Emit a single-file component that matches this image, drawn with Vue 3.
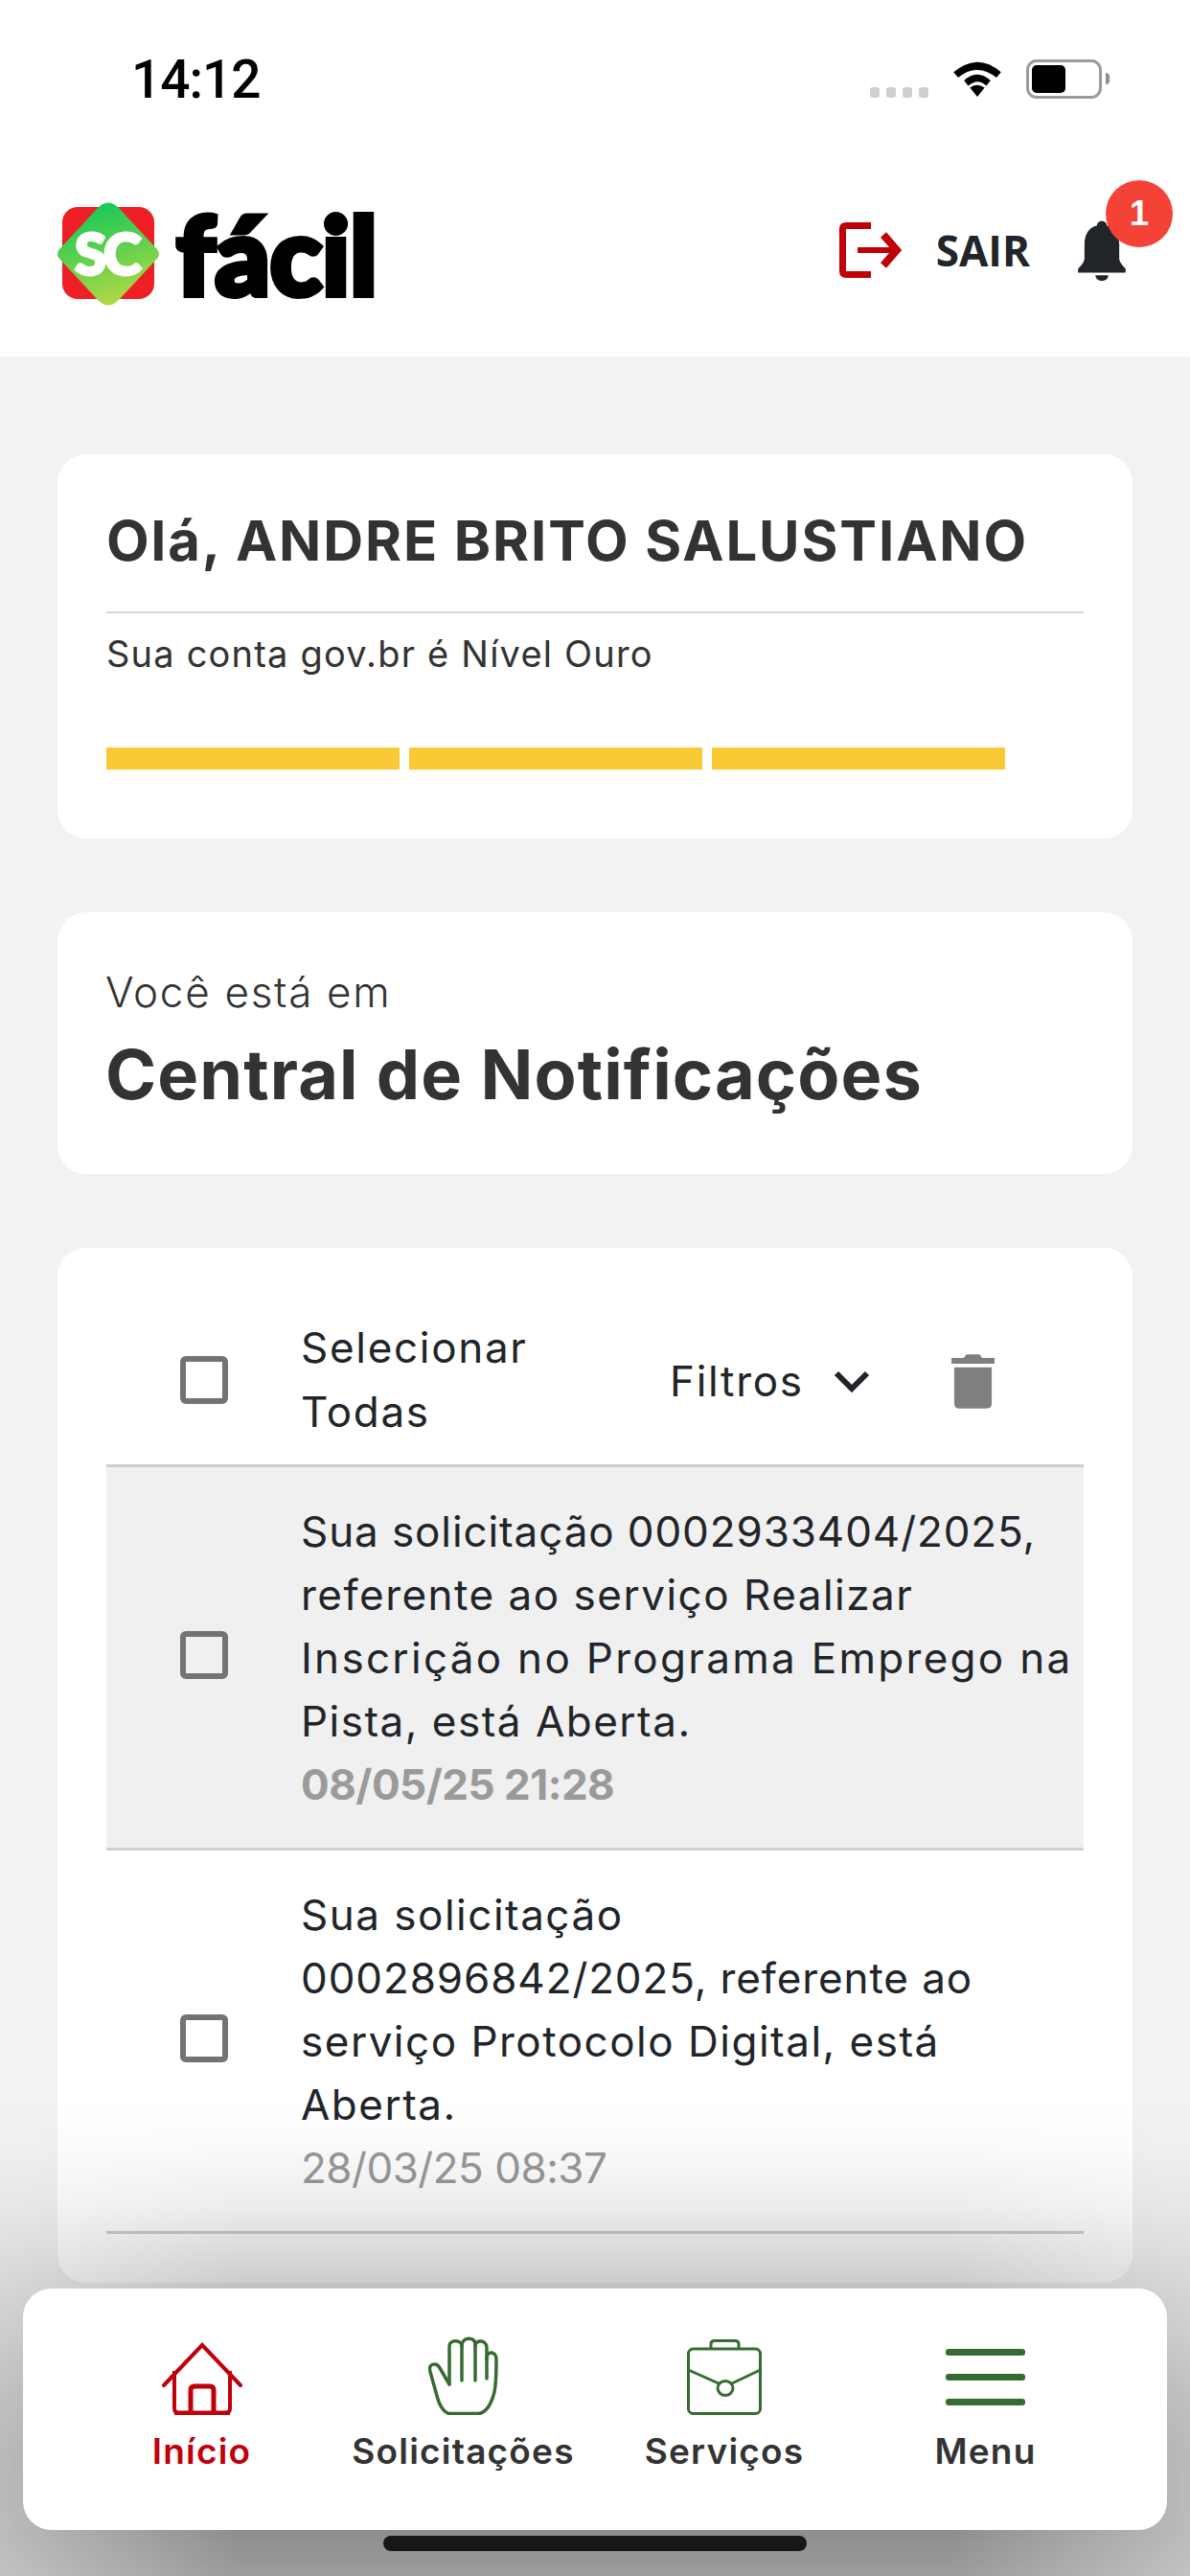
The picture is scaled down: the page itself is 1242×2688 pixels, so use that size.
<script setup>
import { ref } from 'vue'

// fit: the digit-heavy lines run tighter than the others, the long one wider
const notifications = ref([
  {
    id: 1,
    lines: [
      { text: 'Sua solicitação 0002933404/2025,', fit: 'tight' },
      { text: 'referente ao serviço Realizar' },
      { text: 'Inscrição no Programa Emprego na', fit: 'wide' },
      { text: 'Pista, está Aberta.' }
    ],
    date: '08/05/25 21:28',
    unread: true
  },
  {
    id: 2,
    lines: [
      { text: 'Sua solicitação' },
      { text: '0002896842/2025, referente ao', fit: 'tight' },
      { text: 'serviço Protocolo Digital, está' },
      { text: 'Aberta.' }
    ],
    date: '28/03/25 08:37',
    unread: false
  }
])

const navItems = [
  { key: 'home', label: 'Início', active: true },
  { key: 'hand', label: 'Solicitações' },
  { key: 'case', label: 'Serviços' },
  { key: 'menu', label: 'Menu' }
]
</script>

<template>
  <div class="page">
    <header class="top">
      <div class="status">
        <span class="clock">14:12</span>
        <div class="status-icons">
          <div class="signal"><i></i><i></i><i></i><i></i></div>
          <svg class="wifi" width="54" height="40" viewBox="0 0 54 42">
            <path d="M27 41 L19 31 Q27 25 35 31 Z" fill="#000" />
            <path d="M12.5 23 Q27 10 41.5 23 L37 29 Q27 20 17 29 Z" fill="#000" />
            <path d="M1 14 Q27 -8 53 14 L48 20 Q27 3 6 20 Z" fill="#000" />
          </svg>
          <div class="battery"><div class="battery-fill"></div></div>
          <div class="battery-cap"></div>
        </div>
      </div>
      <div class="brand-row">
        <div class="logo">
          <svg class="logo-mark" width="108" height="108" viewBox="0 0 108 108">
            <defs>
              <linearGradient id="diamond" x1="0.35" y1="0" x2="0.65" y2="1">
                <stop offset="0" stop-color="#12c957" />
                <stop offset="1" stop-color="#b6d944" />
              </linearGradient>
            </defs>
            <rect x="6" y="5" width="96" height="96" rx="16" fill="#ee2026" />
            <path d="M43 6 Q54 -5 65 6 L103 47 Q111 54 103 61 L65 102 Q54 113 43 102 L5 61 Q-3 54 5 47 Z" fill="url(#diamond)" />
          </svg>
          <span class="logo-sc">SC</span>
          <span class="logo-word">fácil</span>
        </div>
        <div class="actions">
          <svg width="65" height="58" viewBox="0 0 65 58" fill="none" stroke="#c00008" stroke-width="7">
            <path d="M33 3.500 H7 Q3.500 3.500 3.500 7 V51 Q3.500 54.500 7 54.500 H33" />
            <path d="M19 29 H60" stroke-width="6" />
            <path d="M46 13 L60 29 L46 45" stroke-width="8" />
          </svg>
          <span class="sair">SAIR</span>
          <div class="bell">
            <svg width="52" height="63" viewBox="0 0 52 66" fill="#212529">
              <circle cx="26" cy="6" r="5.500" />
              <path d="M26 5 C13 5 7 14 7 26 V41 C7 46 3 49 0 53 V57 H52 V53 C49 49 45 46 45 41 V26 C45 14 39 5 26 5 Z" />
              <path d="M19 60 H33 C33 64 30 66 26 66 C22 66 19 64 19 60 Z" />
            </svg>
            <span class="badge">1</span>
          </div>
        </div>
      </div>
    </header>

    <main class="content">
      <section class="card greeting">
        <h1>Olá, ANDRE BRITO SALUSTIANO</h1>
        <p>Sua conta gov.br é Nível Ouro</p>
        <div class="levels"><span></span><span></span><span></span></div>
      </section>

      <section class="card where">
        <p>Você está em</p>
        <h2>Central de Notificações</h2>
      </section>

      <section class="card list">
        <div class="list-head">
          <span class="check"></span>
          <span class="select-all">Selecionar<br />Todas</span>
          <span class="filters">
            Filtros
            <svg width="38" height="23" viewBox="0 0 38 23" fill="none" stroke="#212529" stroke-width="6">
              <path d="M3 3 L19 19 L35 3" />
            </svg>
          </span>
          <svg class="trash" width="45" height="57" viewBox="0 0 46 58" fill="#7f7f7f">
            <path d="M16 0 H30 L33 4 H46 V10 H0 V4 H13 Z" />
            <path d="M3 14 H43 V52 Q43 58 37 58 H9 Q3 58 3 52 Z" />
          </svg>
        </div>
        <div v-for="item in notifications" :key="item.id" class="row" :class="{ unread: item.unread }">
          <span class="check"></span>
          <div class="row-text">
            <div v-for="line in item.lines" :key="line.text" :class="line.fit">{{ line.text }}</div>
            <div class="date">{{ item.date }}</div>
          </div>
        </div>
      </section>
    </main>

    <div class="fade"></div>

    <nav class="bottom">
      <div v-for="nav in navItems" :key="nav.key" class="nav-item" :class="{ active: nav.active }">
        <div class="nav-icon">
          <svg v-if="nav.key === 'home'" width="84" height="76" viewBox="0 0 84 76" fill="none" stroke="#c00008" stroke-width="4">
            <path d="M2 45 L42 3 L82 45" stroke-linecap="round" />
            <path d="M13 30 V69 Q13 74 18 74 H66 Q71 74 71 69 V30" />
            <path d="M13 74 H71" stroke-width="5" />
            <path d="M30 74 V50 Q30 46 34 46 H50 Q54 46 54 50 V74" stroke-width="5" />
          </svg>
          <svg v-else-if="nav.key === 'hand'" width="73" height="82" viewBox="0 0 73 82" fill="none" stroke="#366b31" stroke-width="3.500" stroke-linejoin="round" stroke-linecap="round">
            <path d="M22 50 L12 33 C9 27 1 28 1.500 35 L9 62 C11 70 15 78 21 80.500 H53 C61 79 66 70 69 58 C71 48 71 30 71 24 C71 15 61 15 61 22 V44" />
            <path d="M22 50 V10 C22 3 35 3 35 10 V46" />
            <path d="M35 10 C35 0 49 0 49 8 V46" />
            <path d="M49 10 C49 3 61 3 61 12 V24" />
          </svg>
          <svg v-else-if="nav.key === 'case'" width="78" height="79" viewBox="0 0 78 79" fill="none" stroke="#366b31" stroke-width="3">
            <rect x="1.500" y="10" width="75" height="67.500" rx="5" />
            <path d="M25 10 V5 Q25 1.500 29 1.500 H50 Q54 1.500 54 5 V10" />
            <path d="M1.500 32 L33 46 M76.500 32 L47 46" />
            <ellipse cx="40" cy="51" rx="8" ry="7.500" />
          </svg>
          <svg v-else width="83" height="69" viewBox="0 0 83 69" fill="#366b31">
            <rect x="0" y="0" width="83" height="7" rx="3" />
            <rect x="0" y="26" width="83" height="7" rx="3" />
            <rect x="0" y="52" width="83" height="7" rx="3" />
          </svg>
        </div>
        <span>{{ nav.label }}</span>
      </div>
    </nav>

    <div class="home-bar"></div>
  </div>
</template>

<style>
body {
  background: #f2f2f2;
}
</style>

<style scoped>
.page {
  position: relative;
  width: 1242px;
  height: 2688px;
  overflow: hidden;
  background: #f2f2f2;
  font-family: Inter, "Liberation Sans", sans-serif;
  color: #212529;
}

.top {
  background: #fff;
  height: 372px;
}

.status {
  height: 166px;
  display: flex;
  justify-content: space-between;
  padding: 58px 84px 0 137px;
  box-sizing: border-box;
}

.clock {
  font-family: Roboto, sans-serif;
  font-size: 55px;
  font-weight: 500;
  line-height: 50px;
  letter-spacing: -1px;
  color: #000;
}

.status-icons {
  display: flex;
  align-items: flex-start;
  margin-top: 2px;
}

.signal {
  display: flex;
  gap: 7px;
  margin: 31px 24px 0 0;
}

.signal i {
  width: 10px;
  height: 11px;
  border-radius: 3px;
  background: #cfcfcf;
}

.wifi {
  margin: 2px 24px 0 0;
}

.battery {
  width: 79px;
  height: 41px;
  box-sizing: border-box;
  border: 3px solid #9b9b9b;
  border-radius: 11px;
  padding: 3px;
  margin-top: 2px;
}

.battery-fill {
  width: 35px;
  height: 100%;
  background: #000;
  border-radius: 5px;
}

.battery-cap {
  width: 4px;
  height: 12px;
  margin: 16px 0 0 4px;
  background: #8f8f8f;
  border-radius: 0 4px 4px 0;
}

.brand-row {
  display: flex;
  justify-content: space-between;
  padding: 45px 66px 0 59px;
}

.logo {
  position: relative;
  display: flex;
  align-items: center;
  height: 108px;
}

.logo-sc {
  position: absolute;
  left: 19px;
  top: 23px;
  font-family: Lato, sans-serif;
  font-weight: 900;
  font-size: 60px;
  line-height: 60px;
  letter-spacing: -3px;
  color: #fff;
  -webkit-text-stroke: 3px #fff;
}

.logo-word {
  margin-left: 17px;
  font-family: Lato, sans-serif;
  font-weight: 900;
  font-size: 112px;
  line-height: 108px;
  letter-spacing: 0;
  color: #000;
  -webkit-text-stroke: 6px #000;
}

.actions {
  display: flex;
  align-items: center;
  height: 100px;
}

.sair {
  font-family: "Open Sans", sans-serif;
  font-weight: 700;
  font-size: 44px;
  margin: 0 49px 0 36px;
}

.bell {
  position: relative;
  width: 52px;
}

.bell svg {
  display: block;
}

.badge {
  position: absolute;
  left: 30px;
  top: -42px;
  width: 70px;
  height: 70px;
  border-radius: 50%;
  background: #f44336;
  color: #fff;
  font-family: "Liberation Sans", sans-serif;
  font-weight: 700;
  font-size: 36px;
  line-height: 70px;
  text-align: center;
}

.content {
  display: flex;
  flex-direction: column;
  gap: 77px;
  padding: 102px 60px 0;
}

.card {
  background: #fff;
  border-radius: 30px;
}

.greeting {
  height: 401px;
  box-sizing: border-box;
  padding: 58px 51px 0;
}

.greeting h1 {
  margin: 0;
  padding-bottom: 41px;
  border-bottom: 2px solid #d5d5d5;
  font-size: 58px;
  line-height: 65px;
  font-weight: 700;
  letter-spacing: 1.9px;
  color: #333;
}

.greeting p {
  margin: 18px 0 0;
  font-size: 38px;
  line-height: 48px;
  letter-spacing: 1.2px;
  color: #333;
}

.levels {
  display: flex;
  gap: 10px;
  margin-top: 74px;
}

.levels span {
  width: 306px;
  height: 23px;
  background: #f9c935;
}

.where {
  height: 273px;
  box-sizing: border-box;
  padding: 54px 50px 0;
}

.where p {
  margin: 0;
  font-size: 44px;
  line-height: 58px;
  font-weight: 300;
  letter-spacing: 1.7px;
  color: #333;
}

.where h2 {
  margin: 14px 0 0;
  font-size: 72px;
  line-height: 86px;
  font-weight: 700;
  letter-spacing: 1.1px;
  color: #333;
}

.list {
  height: 1080px;
  box-sizing: border-box;
  padding: 0 51px;
}

.list-head {
  display: flex;
  align-items: center;
  height: 229px;
  box-sizing: border-box;
  padding-top: 50px;
  border-bottom: 3px solid #cfcfcf;
  font-size: 44px;
  line-height: 67px;
  letter-spacing: 1.7px;
  color: #212529;
}

.check {
  flex: none;
  width: 50px;
  height: 50px;
  box-sizing: border-box;
  margin: 0 76px 0 77px;
  border: 6px solid #737373;
  border-radius: 6px;
}

.select-all {
  width: 385px;
}

.filters {
  display: flex;
  align-items: center;
  gap: 31px;
  margin-top: 3px;
}

.trash {
  margin: 3px 0 0 85px;
}

.row {
  display: flex;
  align-items: center;
  height: 400px;
  box-sizing: border-box;
  border-bottom: 3px solid #cfcfcf;
  font-size: 44px;
  line-height: 66px;
  letter-spacing: 1.5px;
  white-space: nowrap;
}

.row .check {
  margin-bottom: 6px;
}

.row.unread {
  background: #f0f0f0;
}

.tight {
  letter-spacing: 0.9px;
}

.wide {
  letter-spacing: 2.3px;
}

.date {
  letter-spacing: -0.5px;
  color: #9a9a9a;
}

.unread .date {
  font-weight: 700;
}

.fade {
  position: absolute;
  left: 0;
  right: 0;
  bottom: 0;
  height: 498px;
  background: linear-gradient(
    rgba(0, 0, 0, 0) 0%,
    rgba(0, 0, 0, 0.02) 10%,
    rgba(0, 0, 0, 0.07) 22%,
    rgba(0, 0, 0, 0.2) 39%,
    rgba(0, 0, 0, 0.37) 62%,
    rgba(0, 0, 0, 0.42) 74%,
    rgba(0, 0, 0, 0.41) 91%,
    rgba(0, 0, 0, 0.355) 100%
  );
  mask-image: linear-gradient(90deg, rgba(0, 0, 0, 0.55), #000 250px, #000 992px, rgba(0, 0, 0, 0.55));
}

.bottom {
  position: absolute;
  left: 24px;
  right: 24px;
  top: 2388px;
  height: 252px;
  display: grid;
  grid-template-columns: 273px 273px 272px 273px;
  padding-left: 50px;
  box-sizing: border-box;
  background: #fff;
  border-radius: 30px;
}

.nav-item {
  display: flex;
  flex-direction: column;
  align-items: center;
  padding-top: 44px;
  font-size: 37px;
  line-height: 44px;
  font-weight: 600;
  letter-spacing: 1.2px;
  color: #333;
  white-space: nowrap;
}

.nav-icon {
  display: flex;
  align-items: flex-end;
  height: 88px;
  margin-bottom: 16px;
}

.nav-icon svg {
  display: block;
}

.nav-item.active {
  color: #c00008;
}

.home-bar {
  position: absolute;
  left: 400px;
  top: 2646px;
  width: 442px;
  height: 16px;
  border-radius: 8px;
  background: #171717;
}
</style>
